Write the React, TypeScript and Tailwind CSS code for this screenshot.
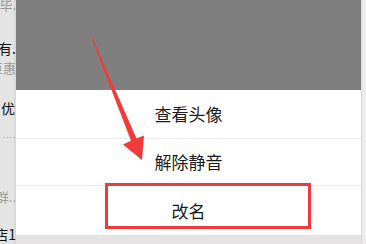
export default function App() {
  const font = { fontFamily: '"Noto Sans CJK SC", "Noto Sans", sans-serif' };

  return (
    <div className="relative flex h-[244px] w-[366px] overflow-hidden bg-white" style={font}>
      {/* clipped chat list behind the sheet */}
      <div className="flex w-[16px] shrink-0 flex-col items-end overflow-hidden bg-[#e4e4e4] shadow-[inset_-2px_0_2px_rgba(0,0,0,0.06)]">
        <div className="mt-[-2px] whitespace-nowrap text-[13px] leading-[14px] text-[#9a9a9a]">毕.</div>
        <div className="mt-[29px] whitespace-nowrap text-[14px] leading-[15px] text-[#111]">有.</div>
        <div className="mt-[5px] whitespace-nowrap text-[13px] leading-[14px] text-[#9a9a9a]">巨惠</div>
        <div className="mt-[26px] mr-[1px] whitespace-nowrap text-[14px] leading-[15px] text-[#111]">优</div>
        <div className="mt-[15px] whitespace-nowrap text-[8px] leading-[8px] tracking-[1px] text-[#999]">....</div>
        <div className="mt-[51px] whitespace-nowrap text-[13px] leading-[14px] text-[#9a9a9a]">群..</div>
        <div className="mt-[23px] whitespace-nowrap text-[14px] leading-[15px] text-[#111]">店1</div>
      </div>

      <div className="flex flex-1 flex-col">
        <div className="h-[90px] shrink-0 bg-[#7f7f7f]" />
        <div className="flex h-[48px] items-center justify-center text-[17px] text-[#1a1a1a]">查看头像</div>
        <div className="h-px bg-[#ececec]" />
        <div className="flex h-[46px] items-center justify-center text-[17px] text-[#1a1a1a]">解除静音</div>
        <div className="h-px bg-[#ececec]" />
        <div className="flex h-[49px] items-center justify-center text-[17px] text-[#1a1a1a]">改名</div>
        <div className="flex-1 bg-[#e5e3e3]" />
      </div>

      <div className="w-[5px] shrink-0 border-l border-[#d6d6d6] bg-[#ececec]" />

      {/* annotation: highlight box */}
      <div className="absolute left-[105px] top-[183px] h-[46px] w-[206px] border-[3px] border-[#ef3b3b]" />

      {/* annotation: arrow */}
      <svg className="pointer-events-none absolute left-0 top-0" width="366" height="244" viewBox="0 0 366 244">
        <polygon
          points="91.5,38 92.5,38 136.5,138.5 144,135.5 142,160 123,144.5 131,140.7"
          fill="#f23a3a"
        />
      </svg>
    </div>
  );
}
